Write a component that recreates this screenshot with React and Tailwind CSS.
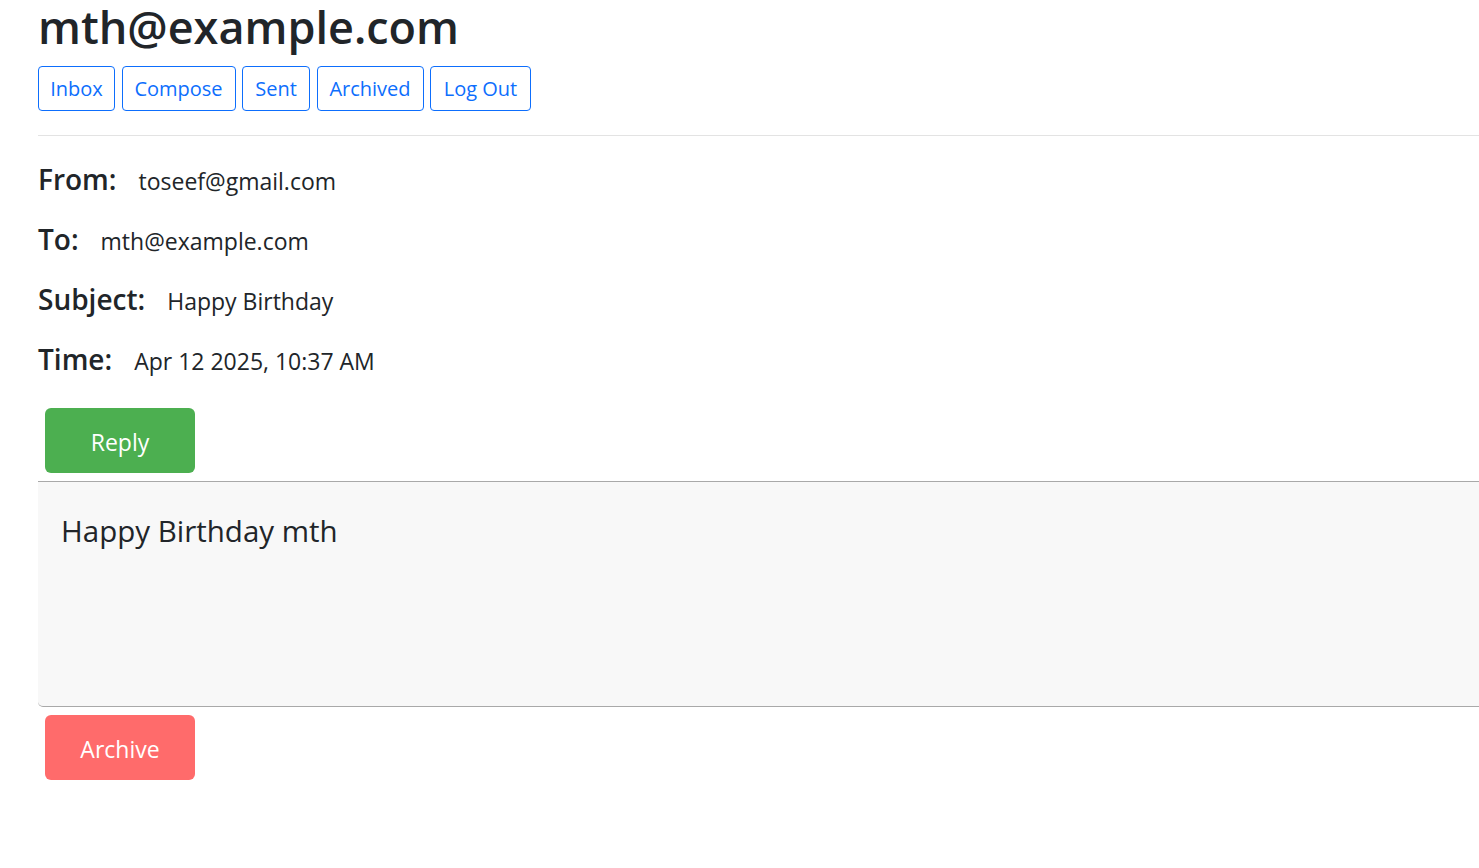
import React from "react";

const navItems = [
  { name: "Inbox", w: "w-[77px]" },
  { name: "Compose", w: "w-[114px]" },
  { name: "Sent", w: "w-[68px]" },
  { name: "Archived", w: "w-[107px]" },
  { name: "Log Out", w: "w-[101px]" },
];

const fields = [
  { label: "From:", value: "toseef@gmail.com" },
  { label: "To:", value: "mth@example.com" },
  { label: "Subject:", value: "Happy Birthday" },
  { label: "Time:", value: "Apr 12 2025, 10:37 AM" },
];

export default function App() {
  return (
    <div className="min-h-screen bg-white font-['Open_Sans','Noto_Sans',sans-serif] text-[#212529]">
      <div className="pl-[38px]">
        {/* Header */}
        <h1 className="text-[45px] leading-[54px] font-semibold">mth@example.com</h1>
        <nav className="mt-[12px] flex gap-[6.5px]">
          {navItems.map((item) => (
            <button
              key={item.name}
              className={`${item.w} h-[45px] border border-[#0d6efd] rounded-[4px] text-[20px] text-[#0d6efd] bg-white`}
            >
              {item.name}
            </button>
          ))}
        </nav>
        <hr className="mt-[24px] border-0 border-t border-[#e3e3e3]" />

        {/* Email meta */}
        <div className="mt-[13px] flex flex-col">
          {fields.map((f) => (
            <div key={f.label} className="flex items-baseline gap-[22px] h-[60px] leading-[60px]">
              <span className="text-[28px] font-semibold">{f.label}</span>
              <span className="text-[23px]">{f.value}</span>
            </div>
          ))}
        </div>

        <button className="ml-[7px] mt-[19px] w-[150px] h-[65px] rounded-[6px] bg-[#4caf50] text-white text-[23px] pt-[3px]">
          Reply
        </button>

        {/* Message body */}
        <div className="mt-[8px] h-[226px] bg-[#f8f8f8] border-y border-[#a9a9a9] rounded-bl-[5px] px-[23px] pt-[29px]">
          <p className="text-[29.5px] leading-[40px]">Happy Birthday mth</p>
        </div>

        <button className="ml-[7px] mt-[8px] w-[150px] h-[65px] rounded-[6px] bg-[#ff6b6b] text-white text-[23px] pt-[3px]">
          Archive
        </button>
      </div>
    </div>
  );
}
